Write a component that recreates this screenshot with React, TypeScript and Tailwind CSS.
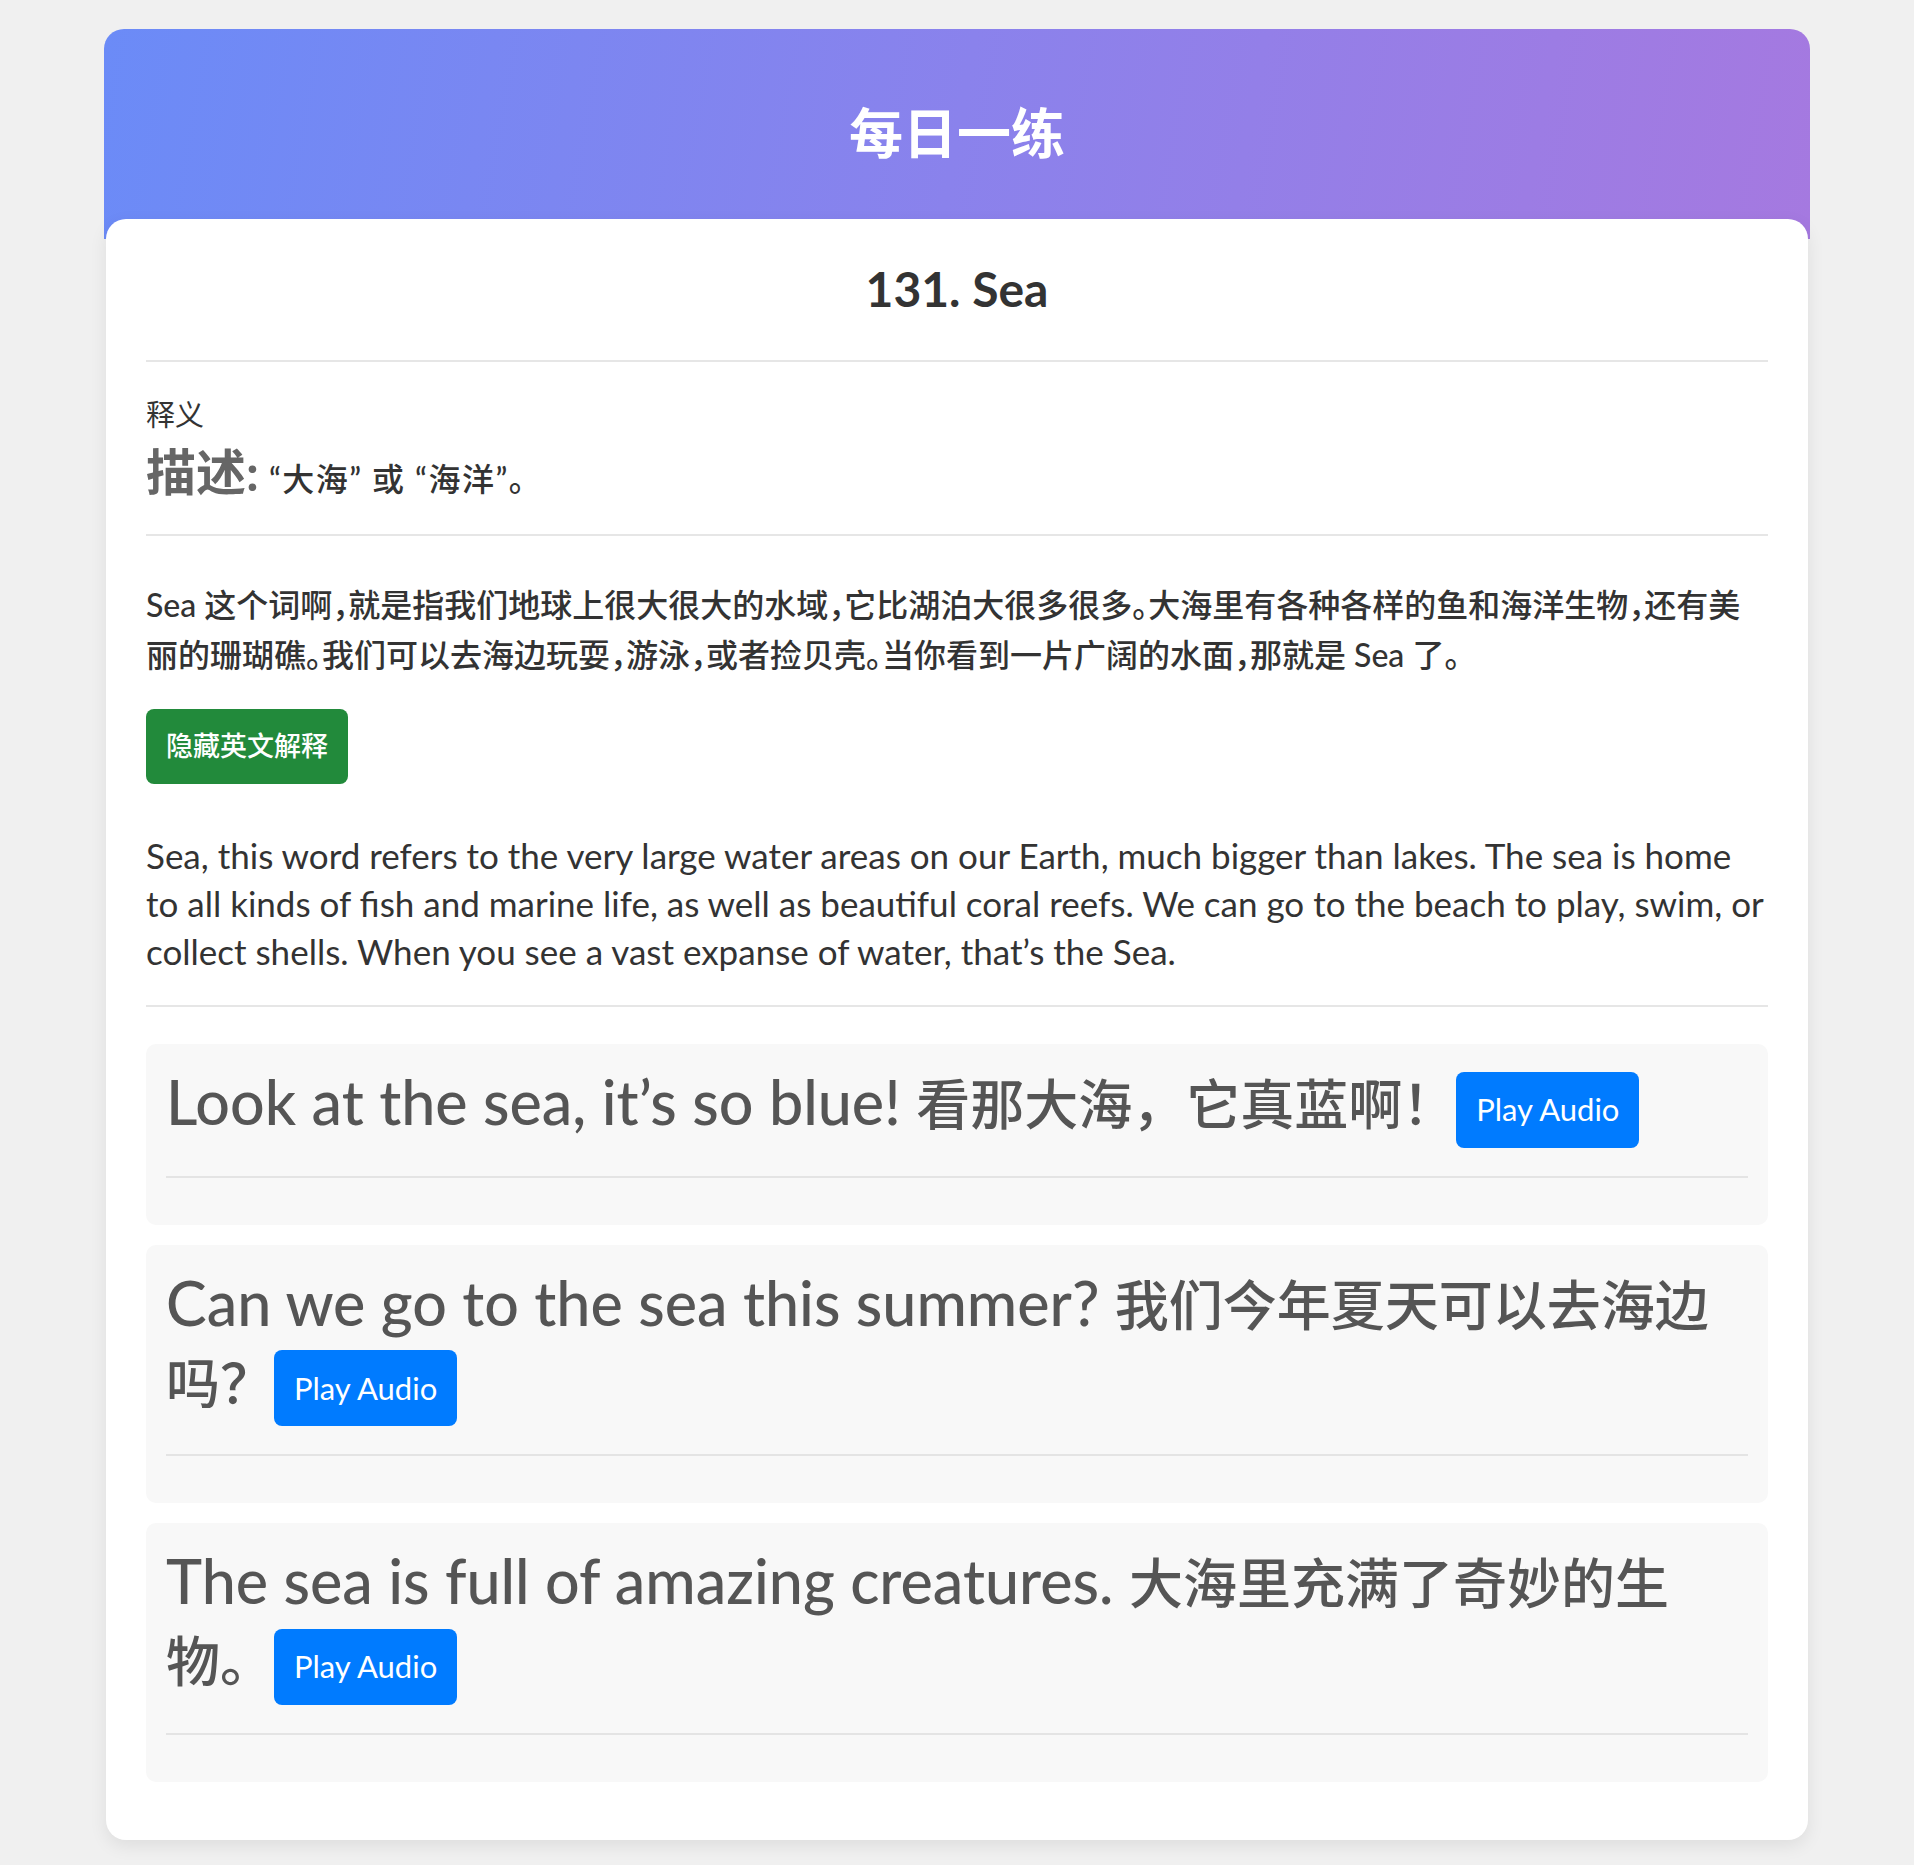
import React from "react";

const sentences: { en: string; zh: string[] }[] = [
  { en: "Look at the sea, it’s so blue!", zh: ["看那大海，它真蓝啊！"] },
  { en: "Can we go to the sea this summer?", zh: ["我们今年夏天可以去海边", "吗？"] },
  { en: "The sea is full of amazing creatures.", zh: ["大海里充满了奇妙的生", "物。"] },
];

function PlayButton() {
  return (
    <button className="inline-flex h-[76px] items-center rounded-[8px] bg-[#007bff] px-[20px] align-middle text-[31px] font-normal leading-none text-white">
      Play Audio
    </button>
  );
}

function SentenceCard({ en, zh }: { en: string; zh: string[] }) {
  return (
    <div className="mb-[20px] rounded-[10px] bg-[#f8f8f8] px-[20px] pt-[20px] pb-[20px]">
      <div className="text-[61px] font-medium leading-[75px] text-[#555]">
        {en} <span className="text-[54px]">{zh[0]}</span>
        {zh.length > 1 ? (
          <>
            <br />
            <span className="text-[54px]">{zh[1]}</span>
          </>
        ) : null}
        <PlayButton />
      </div>
      <div className="mt-[28px] h-[2px] bg-[#e4e4e4]" />
      <div className="h-[27px]" />
    </div>
  );
}

export default function App() {
  return (
    <div className="min-h-[1865px] bg-[#f0f0f0] px-[104px] pt-[29px] pb-[25px] font-['Lato','Noto_Sans_CJK_SC',sans-serif]">
      <div className="flex h-[210px] items-center justify-center rounded-t-[20px] bg-[linear-gradient(100deg,#6b8bf7_0%,#8a82ec_50%,#a579e0_100%)]">
        <h1 className="text-[54px] font-bold leading-none text-white">每日一练</h1>
      </div>
      <div className="relative mx-[2px] -mt-[20px] rounded-[20px] bg-white px-[40px] pt-[40px] pb-[38px] shadow-[0_6px_18px_rgba(0,0,0,0.08)]">
        <h2 className="text-center text-[48px] font-bold leading-[60px] text-[#333]">131. Sea</h2>
        <div className="mt-[41px] h-[2px] bg-[#e6e6e6]" />
        <div className="mt-[30px] text-[29px] leading-[45px] text-[#333]">释义</div>
        <div className="mt-[5px] leading-[60px] text-[#333]">
          <span className="text-[50px] font-bold text-[#666]">描述:</span>
          <span className="ml-[10px] text-[32px] font-medium tracking-[1.5px]">“大海” 或 “海洋”。</span>
        </div>
        <div className="mt-[19px] h-[2px] bg-[#e6e6e6]" />
        <p className="mt-[44px] text-[32px] leading-[50px] font-medium text-[#333] [font-feature-settings:'halt']">
          Sea 这个词啊，就是指我们地球上很大很大的水域，它比湖泊大很多很多。大海里有各种各样的鱼和海洋生物，还有美
          <br />
          丽的珊瑚礁。我们可以去海边玩耍，游泳，或者捡贝壳。当你看到一片广阔的水面，那就是 Sea 了。
        </p>
        <button className="mt-[29px] flex h-[75px] items-center rounded-[8px] bg-[#228a3b] px-[20px] text-[27px] font-medium text-white">
          隐藏英文解释
        </button>
        <p className="mt-[47px] text-[35px] leading-[48px] text-[#333]">
          Sea, this word refers to the very large water areas on our Earth, much bigger than lakes. The sea is home
          <br />
          to all kinds of fish and marine life, as well as beautiful coral reefs. We can go to the beach to play, swim, or
          <br />
          collect shells. When you see a vast expanse of water, that’s the Sea.
        </p>
        <div className="mt-[30px] h-[2px] bg-[#e6e6e6]" />
        <div className="mt-[37px]">
          {sentences.map((s, i) => (
            <SentenceCard key={i} en={s.en} zh={s.zh} />
          ))}
        </div>
      </div>
    </div>
  );
}
